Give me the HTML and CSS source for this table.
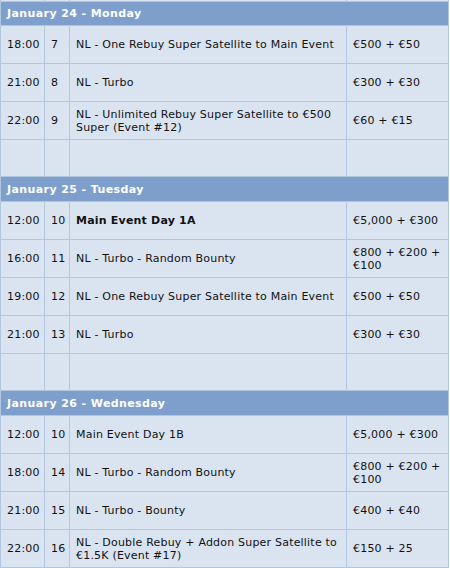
FILE: index.html
```html
<!DOCTYPE html>
<html>
<head>
<meta charset="utf-8">
<link rel="stylesheet" href="styles.css">
</head>
<body>
<table class="sched">
  <colgroup>
    <col class="c-time"><col class="c-num"><col class="c-name"><col class="c-price">
  </colgroup>
  <tr class="stub"><td></td><td></td><td></td><td></td></tr>
  <tr class="day first"><td colspan="4">January 24 - Monday</td></tr>
  <tr><td>18:00</td><td>7</td><td>NL - One Rebuy Super Satellite to Main Event</td><td>€500 + €50</td></tr>
  <tr><td>21:00</td><td>8</td><td>NL - Turbo</td><td>€300 + €30</td></tr>
  <tr><td>22:00</td><td>9</td><td>NL - Unlimited Rebuy Super Satellite to €500 Super (Event #12)</td><td>€60 + €15</td></tr>
  <tr class="blank"><td></td><td></td><td></td><td></td></tr>
  <tr class="day"><td colspan="4">January 25 - Tuesday</td></tr>
  <tr><td>12:00</td><td>10</td><td class="bold">Main Event Day 1A</td><td>€5,000 + €300</td></tr>
  <tr><td>16:00</td><td>11</td><td>NL - Turbo - Random Bounty</td><td>€800 + €200 + €100</td></tr>
  <tr><td>19:00</td><td>12</td><td>NL - One Rebuy Super Satellite to Main Event</td><td>€500 + €50</td></tr>
  <tr><td>21:00</td><td>13</td><td>NL - Turbo</td><td>€300 + €30</td></tr>
  <tr class="blank"><td></td><td></td><td></td><td></td></tr>
  <tr class="day"><td colspan="4">January 26 - Wednesday</td></tr>
  <tr><td>12:00</td><td>10</td><td>Main Event Day 1B</td><td>€5,000 + €300</td></tr>
  <tr><td>18:00</td><td>14</td><td>NL - Turbo - Random Bounty</td><td>€800 + €200 + €100</td></tr>
  <tr><td>21:00</td><td>15</td><td>NL - Turbo - Bounty</td><td>€400 + €40</td></tr>
  <tr><td>22:00</td><td>16</td><td>NL - Double Rebuy + Addon Super Satellite to €1.5K (Event #17)</td><td>€150 + 25</td></tr>
</table>
</body>
</html>
```
FILE: styles.css
```css
html, body {
  margin: 0;
  padding: 0;
  background: #ffffff;
}
body {
  font-family: "DejaVu Sans", Verdana, sans-serif;
  font-size: 11px;
  line-height: 13px;
  color: #111111;
  overflow: hidden;
}
.sched {
  width: 449px;
  margin-top: -1px;
  border-collapse: separate;
  border-spacing: 1px;
  background: #b3c6df;
  table-layout: fixed;
  letter-spacing: 0.2px;
}
.c-time { width: 43px; }
.c-num { width: 24px; }
.c-name { width: 276px; }
.c-price { width: 101px; }
.sched td {
  background: #dae4f1;
  height: 37px;
  padding: 0 6px;
  vertical-align: middle;
  overflow: hidden;
}
.sched tr.stub td {
  height: 1px;
  padding: 0;
}
.sched tr.blank td {
  height: 36px;
}
.sched tr.day td {
  background: #7e9ecb;
  color: #ffffff;
  font-weight: bold;
  letter-spacing: 0.4px;
  height: 24px;
  padding: 0 6px;
}
.sched tr.day.first td {
  height: 23px;
}
.bold {
  font-weight: bold;
}
```
